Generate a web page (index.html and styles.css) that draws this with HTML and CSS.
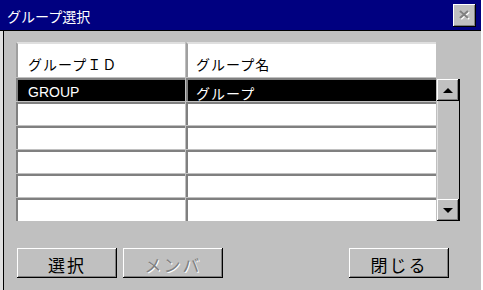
FILE: index.html
```html
<!DOCTYPE html>
<html lang="ja">
<head>
<meta charset="UTF-8" />
<title>グループ選択</title>
<link rel="stylesheet" href="styles.css">
</head>
<body>
  <div class="window">
    <!-- タイトルバー -->
    <div class="titlebar">
      <span class="title">グループ選択</span>
      <button class="close-btn" disabled>
        <svg width="13" height="12" viewBox="0 0 13 12">
          <path d="M2 2 L10 9 M10 2 L2 9" stroke="#fff" stroke-width="2.2" transform="translate(1 1)" />
          <path d="M2 2 L10 9 M10 2 L2 9" stroke="#808080" stroke-width="2.2" />
        </svg>
      </button>
    </div>

    <div class="client">
      <!-- 一覧 -->
      <div class="list">
        <div class="head">グループＩＤ</div>
        <div class="head name">グループ名</div>
        <div class="scrollbar">
          <div class="sb-btn"><span class="arrow up"></span></div>
          <div class="sb-track"></div>
          <div class="sb-btn"><span class="arrow down"></span></div>
        </div>

        <div class="cell selected">GROUP</div>
        <div class="cell name selected">グループ</div>
        <div class="cell"></div>
        <div class="cell name"></div>
        <div class="cell"></div>
        <div class="cell name"></div>
        <div class="cell"></div>
        <div class="cell name"></div>
        <div class="cell"></div>
        <div class="cell name"></div>
        <div class="cell"></div>
        <div class="cell name"></div>
      </div>

      <!-- ボタン -->
      <div class="buttons">
        <button class="btn">選択</button>
        <button class="btn" disabled>メンバ</button>
        <button class="btn close">閉じる</button>
      </div>
    </div>
  </div>
</body>
</html>
```

FILE: styles.css
```css
body {
  margin: 0;
  background: #fff;
  font-family: "Liberation Sans", "Noto Sans CJK JP", sans-serif;
  font-size: 14px;
  color: #000;
}
.window {
  width: 481px;
  background: #dfdfdf;
}
.titlebar {
  height: 31px;
  background: #000080;
  border-bottom: 1px solid #000;
  display: flex;
  align-items: center;
  justify-content: space-between;
  padding: 0 5px 0 7px;
  box-sizing: border-box;
}
.title {
  color: #fff;
  font-size: 14px;
  padding-top: 2px;
}
.close-btn {
  width: 23px;
  height: 23px;
  padding: 0;
  background: #c0c0c0;
  border: none;
  box-shadow: inset -1px -1px #000, inset 1px 1px #fff, inset -2px -2px #808080;
  display: flex;
  align-items: center;
  justify-content: center;
}
.client {
  margin-left: 3px;
  height: 251px;
  background: #c0c0c0;
  border-left: 1px solid #000;
  border-bottom: 1px solid #000;
  padding: 11px 0 0 12px;
}
.list {
  display: grid;
  grid-template-columns: 169px 250px 23px;
  grid-template-rows: 35px repeat(6, 23px);
  gap: 1px;
}
.head, .cell {
  grid-column: 1;
  background: #fff;
  border-top: 2px solid #808080;
  border-left: 2px solid #808080;
  padding-left: 10px;
  white-space: nowrap;
  overflow: hidden;
}
.head.name, .cell.name {
  grid-column: 2;
  padding-left: 8px;
}
.head {
  grid-row: 1;
  border-top-color: #dfdfdf;
  border-left-color: #a0a0a0;
  line-height: 20px;
  padding-top: 11px;
  letter-spacing: 1px;
}
.cell {
  line-height: 18px;
  padding-top: 3px;
}
.cell.name {
  padding-top: 5px;
  letter-spacing: 1px;
}
.cell.selected {
  background: #000;
  color: #fff;
}
.scrollbar {
  grid-column: 3;
  grid-row: 2 / span 6;
  display: flex;
  flex-direction: column;
  margin-top: 1px;
  border-right: 1px solid #000;
}
.sb-btn {
  height: 22px;
  background: #c0c0c0;
  box-shadow: inset -1px -1px #000, inset 1px 1px #fff, inset -2px -2px #808080;
  display: flex;
  align-items: center;
  justify-content: center;
}
.sb-track {
  flex: 1;
  background: #c0c0c0;
  border-left: 1px solid #dfdfdf;
}
.arrow {
  width: 0;
  height: 0;
  border-left: 5px solid transparent;
  border-right: 5px solid transparent;
}
.arrow.up {
  border-bottom: 5px solid #000;
}
.arrow.down {
  border-top: 5px solid #000;
}
.buttons {
  display: flex;
  gap: 6px;
  margin-top: 27px;
  padding-left: 1px;
}
.btn {
  width: 100px;
  height: 30px;
  background: #c0c0c0;
  border: none;
  box-shadow: inset -1px -1px #000, inset 1px 1px #fff, inset -2px -2px #808080;
  font-family: "Noto Sans CJK JP", sans-serif;
  font-size: 17px;
  letter-spacing: 2px;
  padding-top: 3px;
  color: #000;
}
.btn:disabled {
  color: #808080;
  text-shadow: 1px 1px #fff;
}
.btn.close {
  margin-left: auto;
  margin-right: 32px;
}
```
